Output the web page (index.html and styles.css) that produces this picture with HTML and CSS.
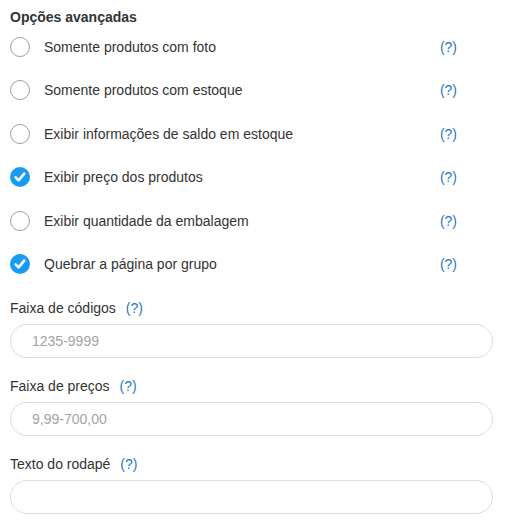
FILE: index.html
```html
<!DOCTYPE html>
<html lang="pt-BR">
<head>
<meta charset="utf-8">
<title>Opções avançadas</title>
<link rel="stylesheet" href="styles.css">
</head>
<body>
<div class="panel">
  <h3 class="title">Opções avançadas</h3>
  <ul class="options">
    <li class="option">
      <span class="radio"></span>
      <span class="option-label">Somente produtos com foto</span>
      <a class="help">(?)</a>
    </li>
    <li class="option">
      <span class="radio"></span>
      <span class="option-label">Somente produtos com estoque</span>
      <a class="help">(?)</a>
    </li>
    <li class="option">
      <span class="radio"></span>
      <span class="option-label">Exibir informações de saldo em estoque</span>
      <a class="help">(?)</a>
    </li>
    <li class="option">
      <span class="radio checked"><svg viewBox="0 0 20 20" width="20" height="20"><path d="M5.6 10.4 L8.6 13.4 L14.2 6.6" fill="none" stroke="#fff" stroke-width="2.6" stroke-linecap="round" stroke-linejoin="round"/></svg></span>
      <span class="option-label">Exibir preço dos produtos</span>
      <a class="help">(?)</a>
    </li>
    <li class="option">
      <span class="radio"></span>
      <span class="option-label">Exibir quantidade da embalagem</span>
      <a class="help">(?)</a>
    </li>
    <li class="option">
      <span class="radio checked"><svg viewBox="0 0 20 20" width="20" height="20"><path d="M5.6 10.4 L8.6 13.4 L14.2 6.6" fill="none" stroke="#fff" stroke-width="2.6" stroke-linecap="round" stroke-linejoin="round"/></svg></span>
      <span class="option-label">Quebrar a página por grupo</span>
      <a class="help">(?)</a>
    </li>
  </ul>

  <div class="field first">
    <label class="field-label">Faixa de códigos <a class="help inline">(?)</a></label>
    <input class="field-input" type="text" placeholder="1235-9999">
  </div>
  <div class="field">
    <label class="field-label">Faixa de preços <a class="help inline">(?)</a></label>
    <input class="field-input" type="text" placeholder="9,99-700,00">
  </div>
  <div class="field">
    <label class="field-label">Texto do rodapé <a class="help inline">(?)</a></label>
    <input class="field-input" type="text">
  </div>
</div>
</body>
</html>
```
FILE: styles.css
```css
html, body {
  margin: 0;
  padding: 0;
  background: #fff;
}
body {
  font-family: "Liberation Sans", Arial, sans-serif;
  font-size: 14px;
  color: #333;
}
.panel {
  padding: 9px 12px 0 10px;
}
.title {
  margin: 0;
  font-size: 14px;
  font-weight: bold;
  line-height: 16px;
  color: #333;
  height: 16px;
}
.options {
  list-style: none;
  margin: 0;
  padding: 0;
}
.option {
  display: flex;
  align-items: center;
  height: 43.5px;
}
.radio {
  width: 20px;
  height: 20px;
  box-sizing: border-box;
  border: 1px solid #9e9e9e;
  border-radius: 50%;
  flex: none;
  display: flex;
  align-items: center;
  justify-content: center;
}
.radio.checked {
  border: none;
  background: #1a9bf2;
}
.radio svg {
  display: block;
}
.option-label {
  flex: 1;
  margin-left: 14px;
  line-height: 20px;
}
.help {
  color: #1f78c8;
  cursor: pointer;
  margin-right: 36px;
}
.help.inline {
  margin-left: 6px;
  margin-right: 0;
}
.field {
  display: flex;
  flex-direction: column;
  margin-top: 18px;
}
.field.first {
  margin-top: 12px;
}
.field-label {
  line-height: 20px;
  height: 20px;
  margin-bottom: 6px;
}
.field-input {
  box-sizing: border-box;
  height: 34px;
  width: 100%;
  border: 1px solid #dcdcdc;
  border-radius: 17px;
  padding: 0 21px;
  font-family: "Liberation Sans", Arial, sans-serif;
  font-size: 14px;
  color: #333;
  outline: none;
  background: #fff;
}
.field-input::placeholder {
  color: #a3a3a3;
}
```
